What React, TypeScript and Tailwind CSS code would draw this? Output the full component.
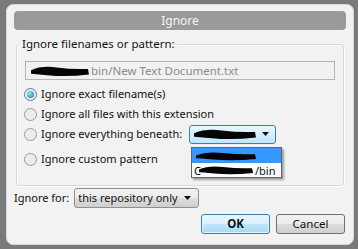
import React from "react";

const Scribble = ({ w, h, className = "" }: { w: number; h: number; className?: string }) => (
  <svg width={w} height={h} viewBox={`0 0 ${w} ${h}`} className={`shrink-0 ${className}`}>
    <path
      d={`M2 ${h * 0.45} Q${w * 0.2} ${h * 0.1} ${w * 0.45} ${h * 0.25} T${w - 3} ${h * 0.35} L${w - 2} ${h * 0.75} Q${w * 0.6} ${h * 0.95} ${w * 0.3} ${h * 0.8} T2 ${h * 0.7} Z`}
      fill="#050505"
    />
  </svg>
);

const Radio = ({ checked }: { checked?: boolean }) => (
  <span
    className={`inline-flex h-[13px] w-[13px] shrink-0 items-center justify-center rounded-full border ${
      checked ? "border-[#5b7d99] bg-[#e6eef4]" : "border-[#9a9a9a] bg-[#ececec]"
    }`}
  >
    {checked ? (
      <span className="h-[7px] w-[7px] rounded-full bg-[radial-gradient(circle_at_35%_35%,#9fe0ff,#1f6f9c)]" />
    ) : null}
  </span>
);

const Arrow = () => (
  <svg width="7" height="4" viewBox="0 0 7 4">
    <path d="M0 0 H7 L3.5 4 Z" fill="#111" />
  </svg>
);

export default function App() {
  const font = { fontFamily: '"Noto Sans", "Open Sans", sans-serif' };
  return (
    <div className="relative h-[249px] w-[358px] overflow-hidden whitespace-nowrap bg-[#7a7a7a]" style={font}>
      <div className="ml-[6px] mt-[4px] flex h-[241px] w-[348px] flex-col rounded-[7px] border border-[#d8d8d8] bg-[#f2f2f2] px-[7px] pt-[6px] text-[11px] text-[#111]">
        <div className="flex h-[19px] items-center justify-center rounded-[4px] bg-[#9a9a9a] text-[12px] text-[#f6f6f6]">
          Ignore
        </div>
        <fieldset className="relative mx-[2px] mt-[7px] h-[149px] rounded-[3px] border border-[#d6dadd] px-[8px] shadow-[inset_1px_1px_0_#fff,1px_1px_0_#fff]">
          <legend className="-ml-[5px] px-[2px] text-[11.5px] leading-[14px]">Ignore filenames or pattern:</legend>
          <div className="mt-[10px] flex h-[19px] items-center border border-[#b4b4b4] bg-[#f1f1f1] pl-[3px] text-[11.5px] text-[#8a8a8a]">
            <Scribble w={62} h={14} />
            <span>bin/New Text Document.txt</span>
          </div>
          <div className="mt-[4px] flex flex-col">
            <div className="-ml-[1px] flex h-[20px] items-center gap-[4px]">
              <Radio checked />
              <span>Ignore exact filename(s)</span>
            </div>
            <div className="-ml-[1px] flex h-[20px] items-center gap-[4px]">
              <Radio />
              <span>Ignore all files with this extension</span>
            </div>
            <div className="-ml-[1px] flex h-[20px] items-center gap-[4px]">
              <Radio />
              <span>Ignore everything beneath:</span>
              <div className="ml-[3px] flex h-[19px] w-[87px] items-center rounded-[3px] border border-[#3c7fb1] bg-[linear-gradient(#eaf6fd,#bee6fd)] pl-[2px] pr-[6px]">
                <Scribble w={66} h={14} />
                <span className="ml-auto">
                  <Arrow />
                </span>
              </div>
            </div>
            <div className="-ml-[1px] mt-[5px] flex h-[20px] items-center gap-[4px]">
              <Radio />
              <span>Ignore custom pattern</span>
            </div>
          </div>
          <div className="absolute left-[174px] top-[96px] w-[91px] border border-[#646464] bg-white shadow-[2px_2px_2px_rgba(0,0,0,0.35)]">
            <div className="flex h-[15px] items-center bg-[#3399ff] pl-[2px]">
              <Scribble w={64} h={12} />
            </div>
            <div className="flex h-[14px] items-center pl-[2px] leading-none">
              <span className="text-black">C</span>
              <Scribble w={58} h={12} className="-ml-[4px]" />
              <span>/bin</span>
            </div>
          </div>
        </fieldset>
        <div className="mt-[2px] flex items-center gap-[5px]">
          <span>Ignore for:</span>
          <div className="flex h-[20px] w-[125px] items-center rounded-[3px] border border-[#8e8f8f] bg-[linear-gradient(#f2f2f2,#ebebeb_50%,#dddddd_50%,#cfcfcf)] pl-[3px] pr-[7px]">
            <span>this repository only</span>
            <span className="ml-auto">
              <Arrow />
            </span>
          </div>
        </div>
        <div className="mt-[6px] flex justify-end gap-[6px] pr-[1px]">
          <button className="flex h-[20px] w-[69px] items-center justify-center rounded-[3px] border border-[#3c7fb1] bg-[linear-gradient(#eaf6fd,#d9f0fc_50%,#bee6fd_50%,#a7d9f5)] text-[11.5px] font-bold shadow-[inset_0_0_0_1px_#e0f4ff]">
            OK
          </button>
          <button className="flex h-[20px] w-[69px] items-center justify-center rounded-[3px] border border-[#707070] bg-[linear-gradient(#f2f2f2,#ebebeb_50%,#dddddd_50%,#cfcfcf)] text-[11.5px]">
            Cancel
          </button>
        </div>
      </div>
    </div>
  );
}
